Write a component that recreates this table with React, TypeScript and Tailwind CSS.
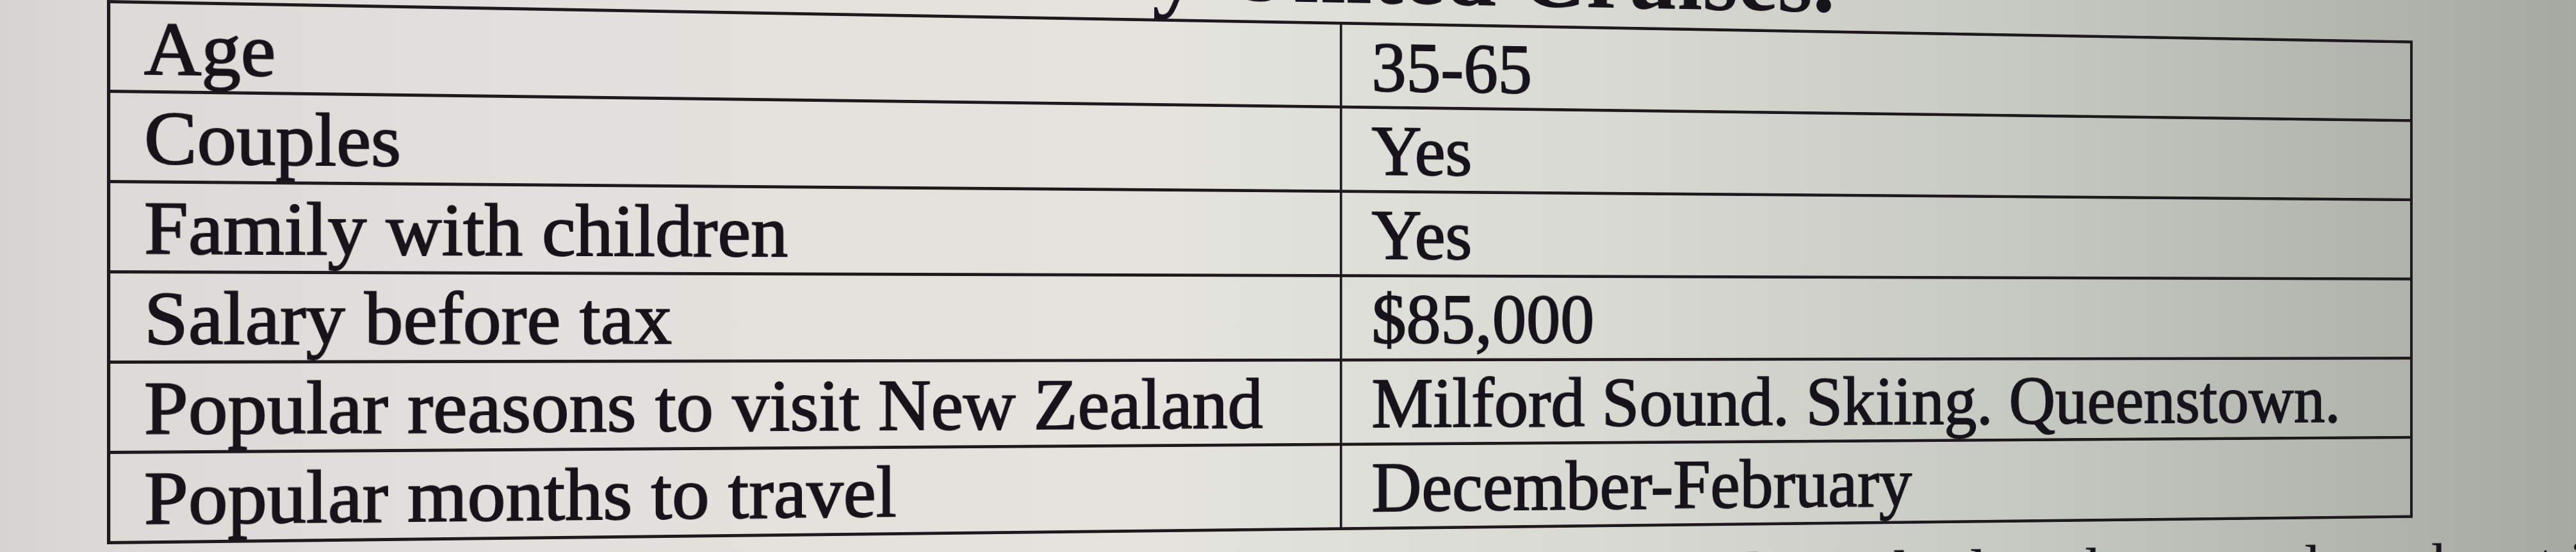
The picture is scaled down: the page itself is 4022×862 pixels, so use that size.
const rows = [
  { label: 'Age', value: '35-65' },
  { label: 'Couples', value: 'Yes' },
  { label: 'Family with children', value: 'Yes' },
  { label: 'Salary before tax', value: '$85,000' },
  { label: 'Popular reasons to visit New Zealand', value: 'Milford Sound. Skiing. Queenstown.' },
  { label: 'Popular months to travel', value: 'December-February' },
];

export default function App() {
  return (
    <div className="relative h-[862px] w-full overflow-hidden bg-[linear-gradient(to_right,#d6d4d0_0%,#dcdad6_4%,#e2e0dc_20%,#e4e3de_45%,#d9dad4_62%,#c7c9c3_78%,#b2b4ae_92%,#a6a8a2_100%)] font-['Liberation_Serif',serif] text-[#17131a] [perspective:4000px] [perspective-origin:2011px_515px]">
      <div className="ml-[167px] -mt-[166px] w-[3887px] origin-left [transform:rotateY(8.3deg)]">
        {/* heading line, mostly off screen */}
        <div className="mb-[6px] w-[2814px] whitespace-nowrap text-right text-[160px] font-bold leading-none">
          by United Cruises.
        </div>

        {/* table */}
        <div className="border-[5px] border-[#1d191c]">
          {rows.map((row, i) => (
            <div
              key={row.label}
              className={
                i === 0
                  ? 'grid h-[135px] grid-cols-[1950px_1fr]'
                  : 'grid h-[141px] grid-cols-[1950px_1fr] border-t-[5px] border-[#1d191c]'
              }
            >
              <div className="whitespace-nowrap border-r-[4px] border-[#1d191c] pl-[50px] pt-[12px] text-[118px] leading-none [-webkit-text-stroke:2px_#17131a]">
                {row.label}
              </div>
              <div className="whitespace-nowrap pl-[50px] pt-[12px] text-[118px] leading-none [-webkit-text-stroke:2px_#17131a]">
                {row.value}
              </div>
            </div>
          ))}
        </div>

        {/* following paragraph, mostly off screen */}
        <div className="mt-[30px] whitespace-nowrap text-[118px] leading-none">
          Use the table to decide which holiday packages to include in the brochure, and work out its cost in summer.
        </div>
      </div>
    </div>
  );
}
